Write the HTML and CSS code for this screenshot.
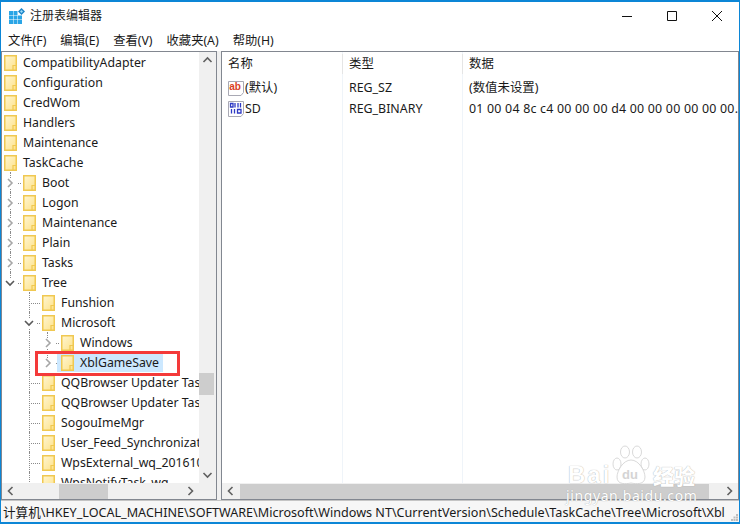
FILE: index.html
```html
<!DOCTYPE html>
<html lang="zh">
<head>
<meta charset="utf-8">
<title>注册表编辑器</title>
<link rel="stylesheet" href="styles.css">
</head>
<body>
<svg class="defs" width="0" height="0" aria-hidden="true">
  <defs>
    <linearGradient id="fg" x1="0" y1="0" x2="1" y2="1">
      <stop offset="0" stop-color="#fff6d2"/>
      <stop offset="1" stop-color="#fde28a"/>
    </linearGradient>
    <symbol id="folder" viewBox="0 0 13 16">
      <path d="M.75 .75H12.25V15.25H.75Z" fill="url(#fg)" stroke="#f0c851" stroke-width="1.5"/>
      <path d="M9 15V10.500H12.500" fill="none" stroke="#f0c851" stroke-width="1.200"/>
    </symbol>
    <symbol id="open" viewBox="0 0 10 10">
      <path d="M1 3L5 7L9 3" fill="none" stroke="#595959" stroke-width="1.600"/>
    </symbol>
    <symbol id="closed" viewBox="0 0 10 10">
      <path d="M3 1L7 5L3 9" fill="none" stroke="#a6a6a6" stroke-width="1.600"/>
    </symbol>
  </defs>
</svg>
<div class="window">
  <header class="titlebar">
    <svg class="appicon" width="16" height="16" viewBox="0 0 16 16">
      <path d="M0 3H4V7H0ZM4.500 3H8.500V7H4.500ZM0 7.500H4V11.500H0ZM4.500 7.500H8.500V11.500H4.500ZM9 7.500H13V11.500H9ZM0 12H4V16H0ZM4.500 12H8.500V16H4.500ZM9 12H13V16H9Z" fill="#2aa5e6"/>
      <path d="M12.500 0L16 3.500L12.500 7L9 3.500Z" fill="#1d86c9"/>
      <path d="M12.500 2L14 3.500L12.500 5L11 3.500Z" fill="#9fdcf8"/>
    </svg>
    <span class="title">注册表编辑器</span>
    <div class="controls">
      <svg width="10" height="10" viewBox="0 0 10 10"><path d="M0 5.500H10" stroke="#111"/></svg>
      <svg width="10" height="10" viewBox="0 0 10 10"><path d="M.5 .5H9.500V9.500H.5Z" fill="none" stroke="#111"/></svg>
      <svg width="10" height="10" viewBox="0 0 10 10"><path d="M0 0L10 10M10 0L0 10" stroke="#111"/></svg>
    </div>
  </header>
  <nav class="menu">
    <span>文件(F)</span><span>编辑(E)</span><span>查看(V)</span><span>收藏夹(A)</span><span>帮助(H)</span>
  </nav>
  <main class="panes">
    <section class="pane tree-pane">
      <div class="pane-top">
        <ul class="tree">
          <li class="row l1"><svg class="folder"><use href="#folder"/></svg><span>CompatibilityAdapter</span></li>
          <li class="row l1"><svg class="folder"><use href="#folder"/></svg><span>Configuration</span></li>
          <li class="row l1"><svg class="folder"><use href="#folder"/></svg><span>CredWom</span></li>
          <li class="row l1"><svg class="folder"><use href="#folder"/></svg><span>Handlers</span></li>
          <li class="row l1"><svg class="folder"><use href="#folder"/></svg><span>Maintenance</span></li>
          <li class="row l1"><svg class="folder"><use href="#folder"/></svg><span>TaskCache</span></li>
          <li class="row l2 guide"><svg class="chev"><use href="#closed"/></svg><i class="dots short"></i><svg class="folder"><use href="#folder"/></svg><span>Boot</span></li>
          <li class="row l2 guide"><svg class="chev"><use href="#closed"/></svg><i class="dots short"></i><svg class="folder"><use href="#folder"/></svg><span>Logon</span></li>
          <li class="row l2 guide"><svg class="chev"><use href="#closed"/></svg><i class="dots short"></i><svg class="folder"><use href="#folder"/></svg><span>Maintenance</span></li>
          <li class="row l2 guide"><svg class="chev"><use href="#closed"/></svg><i class="dots short"></i><svg class="folder"><use href="#folder"/></svg><span>Plain</span></li>
          <li class="row l2 guide"><svg class="chev"><use href="#closed"/></svg><i class="dots short"></i><svg class="folder"><use href="#folder"/></svg><span>Tasks</span></li>
          <li class="row l2 guide end"><svg class="chev"><use href="#open"/></svg><i class="dots short"></i><svg class="folder"><use href="#folder"/></svg><span>Tree</span></li>
          <li class="row l3 guide"><i class="dots long"></i><svg class="folder"><use href="#folder"/></svg><span>Funshion</span></li>
          <li class="row l3 guide"><svg class="chev"><use href="#open"/></svg><i class="dots short"></i><svg class="folder"><use href="#folder"/></svg><span>Microsoft</span></li>
          <li class="row l4 guide sub"><svg class="chev"><use href="#closed"/></svg><i class="dots short"></i><svg class="folder"><use href="#folder"/></svg><span>Windows</span></li>
          <li class="row l4 guide sub end2"><svg class="chev"><use href="#closed"/></svg><i class="dots short"></i><div class="selected"><svg class="folder"><use href="#folder"/></svg><span>XblGameSave</span></div></li>
          <li class="row l3 guide"><i class="dots long"></i><svg class="folder"><use href="#folder"/></svg><span>QQBrowser Updater Task</span></li>
          <li class="row l3 guide"><i class="dots long"></i><svg class="folder"><use href="#folder"/></svg><span>QQBrowser Updater Task</span></li>
          <li class="row l3 guide"><i class="dots long"></i><svg class="folder"><use href="#folder"/></svg><span>SogouImeMgr</span></li>
          <li class="row l3 guide"><i class="dots long"></i><svg class="folder"><use href="#folder"/></svg><span>User_Feed_Synchronization</span></li>
          <li class="row l3 guide"><i class="dots long"></i><svg class="folder"><use href="#folder"/></svg><span>WpsExternal_wq_20161010</span></li>
          <li class="row l3 guide"><i class="dots long"></i><svg class="folder"><use href="#folder"/></svg><span>WpsNotifyTask_wq</span></li>
        </ul>
        <div class="vscroll">
          <svg class="arrow" viewBox="0 0 10 10"><path d="M1 7L5 3L9 7" fill="none" stroke="#606060" stroke-width="1.600"/></svg>
          <div class="vtrack"><div class="vthumb"></div></div>
          <svg class="arrow" viewBox="0 0 10 10"><path d="M1 3L5 7L9 3" fill="none" stroke="#606060" stroke-width="1.600"/></svg>
        </div>
      </div>
      <div class="hscroll tree-h">
        <svg class="arrow" viewBox="0 0 10 10"><path d="M7 1L3 5L7 9" fill="none" stroke="#606060" stroke-width="1.600"/></svg>
        <div class="htrack"><div class="hthumb left-thumb"></div></div>
        <svg class="arrow" viewBox="0 0 10 10"><path d="M3 1L7 5L3 9" fill="none" stroke="#606060" stroke-width="1.600"/></svg>
      </div>
    </section>
    <section class="pane list-pane">
      <div class="list">
        <div class="cols">
          <div class="col name">名称</div><div class="col type">类型</div><div class="col data">数据</div>
        </div>
        <div class="entry">
          <div class="col name">
            <svg class="regicon" viewBox="0 0 16 16"><path d="M.5 1.500H15.500V12.500L13 15.500H.5Z" fill="#fff" stroke="#a9a9b4"/><text x="1.200" y="10" class="ab">ab</text></svg>
            <span>(默认)</span>
          </div>
          <div class="col type">REG_SZ</div><div class="col data">(数值未设置)</div>
        </div>
        <div class="entry">
          <div class="col name">
            <svg class="regicon" viewBox="0 0 16 16"><path d="M.5 .5H15.500V12.500L13 15.500H.5Z" fill="#fff" stroke="#a9a9b4"/><path d="M2.500 2.500H5V6H2.500ZM7 2V6.500M10 2V6.500M12.500 2V6.500M3.500 8V12.500M6.500 8V12.500M9.500 8.500H13V12H9.500Z" fill="none" stroke="#2d39c4" stroke-width="1.300"/></svg>
            <span>SD</span>
          </div>
          <div class="col type">REG_BINARY</div><div class="col data hex">01 00 04 8c c4 00 00 00 d4 00 00 00 00 00 00.</div>
        </div>
      </div>
      <div class="hscroll">
        <svg class="arrow" viewBox="0 0 10 10"><path d="M7 1L3 5L7 9" fill="none" stroke="#606060" stroke-width="1.600"/></svg>
        <div class="htrack"><div class="hthumb right-thumb"></div></div>
        <svg class="arrow" viewBox="0 0 10 10"><path d="M3 1L7 5L3 9" fill="none" stroke="#606060" stroke-width="1.600"/></svg>
      </div>
    </section>
  </main>
  <footer class="status">
    <span class="path">计算机\HKEY_LOCAL_MACHINE\SOFTWARE\Microsoft\Windows NT\CurrentVersion\Schedule\TaskCache\Tree\Microsoft\Xbl</span>
    <svg class="grip" width="7" height="7" viewBox="0 0 7 7"><path d="M5 0H7V2H5ZM2.500 2.500H4.500V4.500H2.500ZM5 2.500H7V4.500H5ZM0 5H2V7H0ZM2.500 5H4.500V7H2.500ZM5 5H7V7H5Z" fill="#bdbdbd"/></svg>
  </footer>
</div>
<div class="highlight"></div>
<div class="watermark">
  <svg class="paw" width="38" height="40" viewBox="0 0 38 40"><g fill="#fff" fill-opacity=".7" stroke="#cfcfcf" stroke-width=".8"><ellipse cx="5" cy="19" rx="4" ry="6"/><ellipse cx="13" cy="7" rx="4.500" ry="6"/><ellipse cx="25" cy="7" rx="4.500" ry="6"/><ellipse cx="33" cy="19" rx="4" ry="6"/><path d="M19 15C11 15 5 26 5 32C5 40 14 39 19 38C24 39 33 40 33 32C33 26 27 15 19 15Z"/></g></svg>
  <div class="wm-line"><b class="bai">Bai</b><b class="du">du</b><b class="jy">经验</b></div>
  <div class="wm-url">jingyan.baidu.com</div>
</div>
</body>
</html>
```
FILE: styles.css
```css
* { box-sizing: border-box; }
html, body { margin: 0; padding: 0; }
body {
  width: 740px;
  height: 524px;
  overflow: hidden;
  position: relative;
  font: 12.3px/20px "Noto Sans", "Noto Sans CJK SC", sans-serif;
  color: #1a1a1a;
  background: #fff;
}
.defs { position: absolute; }
.window {
  height: 524px;
  display: flex;
  flex-direction: column;
  border: 1px solid #0c86d6;
  border-top-width: 2px;
  border-bottom-width: 2px;
}
.titlebar {
  height: 28px;
  flex: none;
  display: flex;
  align-items: center;
  padding-left: 8px;
  background: #fff;
}
.appicon { flex: none; }
.title { margin-left: 5px; font-size: 12px; }
.controls {
  margin-left: auto;
  display: flex;
  gap: 35px;
  padding-right: 17px;
}
.menu {
  height: 21px;
  flex: none;
  display: flex;
  align-items: center;
  gap: 14px;
  padding-left: 7px;
  font-size: 12.3px;
}
.panes {
  flex: 1;
  min-height: 0;
  display: flex;
  gap: 4px;
  background: #f0f0f0;
}
.pane {
  display: flex;
  flex-direction: column;
  border: 1px solid #828790;
  background: #fff;
  min-width: 0;
}
.tree-pane { width: 216px; flex: none; }
.list-pane { flex: 1; }
.pane-top { flex: 1; min-height: 0; display: flex; }
.tree {
  list-style: none;
  margin: 0;
  padding: 0;
  flex: 1;
  min-width: 0;
  overflow: hidden;
}
.row {
  height: 20px;
  padding-top: 2px;
  display: flex;
  align-items: center;
  white-space: nowrap;
  position: relative;
}
.row > span, .selected > span { margin-left: 6px; }
.l1 { padding-left: 2px; }
.l2 { padding-left: 3px; }
.l3 { padding-left: 22px; }
.l4 { padding-left: 41px; }
.folder { width: 13px; height: 16px; flex: none; }
.chev {
  width: 10px;
  height: 10px;
  flex: none;
  background: #fff;
  position: relative;
  z-index: 1;
}
.dots {
  flex: none;
  height: 1px;
  border-top: 1px dotted #8a8a8a;
}
.dots.short { width: 3px; margin-left: 3px; margin-right: 2px; }
.dots.long { width: 9px; margin-left: 7px; margin-right: 2px; }
.guide::before {
  content: "";
  position: absolute;
  top: 0;
  bottom: 0;
  border-left: 1px dotted #8a8a8a;
}
.l2.guide::before { left: 8px; }
.l3.guide::before { left: 27px; }
.l4.guide::before { left: 27px; }
.end::before { bottom: 10px; }
.sub::after {
  content: "";
  position: absolute;
  left: 45px;
  top: 0;
  bottom: 0;
  border-left: 1px dotted #8a8a8a;
}
.end2::after { bottom: 10px; }
.selected {
  display: flex;
  align-items: center;
  height: 20px;
  margin-top: -2px;
  margin-left: -4px;
  padding: 2px 4px 0;
  background: #cce8ff;
  position: relative;
}
.vscroll {
  width: 17px;
  flex: none;
  display: flex;
  flex-direction: column;
  background: #f0f0f0;
}
.arrow { width: 17px; height: 16px; flex: none; padding: 3px; }
.vtrack { flex: 1; position: relative; }
.vthumb {
  position: absolute;
  top: 305px;
  left: 0;
  right: 2px;
  height: 22px;
  background: #cdcdcd;
}
.hscroll {
  height: 16px;
  flex: none;
  display: flex;
  align-items: center;
  background: #f0f0f0;
}
.tree-h { padding-right: 17px; }
.htrack { flex: 1; height: 15px; position: relative; }
.hthumb { position: absolute; top: 0; bottom: 0; background: #cdcdcd; }
.left-thumb { left: 40px; width: 49px; }
.right-thumb { left: 1px; right: 12px; }
.list {
  flex: 1;
  min-height: 0;
  overflow: hidden;
  background-image: linear-gradient(#eff4f9, #eff4f9), linear-gradient(#eff4f9, #eff4f9);
  background-repeat: no-repeat;
  background-size: 1px 100%;
  background-position: 120px 0, 240px 0;
}
.cols, .entry { display: flex; height: 21px; align-items: center; white-space: nowrap; }
.cols { height: 25px; padding-bottom: 1px; }
.col { flex: none; padding-left: 6px; font-size: 12.4px; }
.name { width: 120px; display: flex; align-items: center; }
.type { width: 120px; }
.data { flex: 1; overflow: hidden; }
.hex { letter-spacing: .22px; }
.cols .type, .cols .data { border-left: 1px solid #e5e5e5; padding-left: 6px; }
.entry .type, .entry .data { padding-left: 7px; }
.regicon { width: 16px; height: 16px; flex: none; margin-right: 1px; }
.ab { font: bold 10px "Liberation Sans", sans-serif; fill: #d9411e; }
.status {
  height: 22px;
  flex: none;
  padding: 2px 1px 0 2px;
  display: flex;
  align-items: center;
  justify-content: space-between;
  white-space: nowrap;
  overflow: hidden;
  background: #f6f6f6;
  border-top: 1px solid #c4c4c4;
  font-size: 12.6px;
}
.grip { flex: none; align-self: flex-end; margin-bottom: 1px; }
.highlight {
  position: absolute;
  left: 35px;
  top: 351px;
  width: 145px;
  height: 25px;
  border: 3px solid #f43a3a;
}
.watermark {
  position: absolute;
  left: 566px;
  top: 445px;
  width: 140px;
  color: #fff;
  pointer-events: none;
}
.paw { display: block; margin: 0 0 -20px 46px; }
.wm-line {
  display: flex;
  align-items: center;
  height: 20px;
  font: bold 24px/20px "Liberation Sans", sans-serif;
  text-shadow: 0 0 1px #999;
}
.bai { margin-left: 2px; width: 45px; letter-spacing: 2px; }
.du { margin-left: 9px; width: 20px; font-size: 13px; color: #d4d4d4; text-shadow: none; }
.jy { margin-left: 11px; font-size: 21px; font-family: "Noto Sans CJK SC", sans-serif; }
.wm-url {
  margin-top: 4px;
  font: 14px/14px "Noto Sans", sans-serif;
  letter-spacing: .6px;
  text-shadow: 0 0 1px #999;
}
```
